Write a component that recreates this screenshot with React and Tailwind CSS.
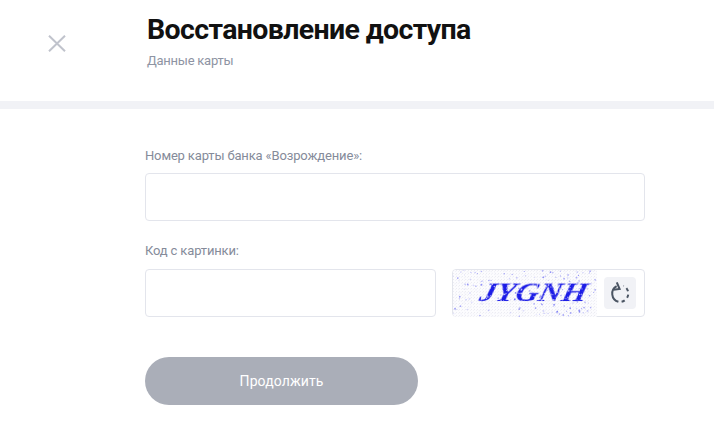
import React from 'react';

// deterministic speckle for the captcha picture
function makeDots(count, seedStart, minR, maxR, minO, maxO) {
    const dots = [];
    let seed = seedStart;
    const next = () => {
        seed = (seed * 16807) % 2147483647;
        return seed / 2147483647;
    };
    for (let i = 0; i < count; i++) {
        dots.push({
            x: next() * 143,
            y: next() * 47,
            r: minR + next() * (maxR - minR),
            o: minO + next() * (maxO - minO),
        });
    }
    return dots;
}

const blueDots = makeDots(170, 7, 0.5, 1, 0.12, 0.55);
const paleDots = makeDots(620, 91, 0.5, 0.9, 0.6, 1);

function Captcha() {
    return (
        <svg width="144" height="47" viewBox="0 0 144 47" className="block rounded-l-[3px]">
            <defs>
                <pattern id="grain" width="3" height="3" patternUnits="userSpaceOnUse">
                    <rect width="3" height="3" fill="#fcfcfe" />
                    <rect width="1" height="1" fill="#ececf2" />
                    <rect x="2" y="1" width="1" height="1" fill="#f2f2f7" />
                </pattern>
                <filter id="soft">
                    <feGaussianBlur stdDeviation="0.35" />
                </filter>
            </defs>
            <rect width="144" height="47" fill="url(#grain)" />
            <text
                x="25"
                y="31"
                transform="skewX(-14) translate(8 0)"
                fontFamily="'Liberation Serif', serif"
                fontStyle="italic"
                fontWeight="700"
                fontSize="26"
                fill="#1f1fe6"
                textLength="107"
                lengthAdjust="spacingAndGlyphs"
                filter="url(#soft)"
            >
                JYGNH
            </text>
            {paleDots.map((d, i) => (
                <circle key={i} cx={d.x} cy={d.y} r={d.r} fill="#f4f4fb" opacity={d.o * 0.8} />
            ))}
            {blueDots.map((d, i) => (
                <circle key={i} cx={d.x} cy={d.y} r={d.r} fill="#3a3af0" opacity={d.o} />
            ))}
        </svg>
    );
}

function RefreshIcon() {
    return (
        <svg width="22" height="24" viewBox="0 0 22 24" fill="none" stroke="#4b5563" strokeWidth="2">
            <path d="M7.6 5.2A8.5 8.5 0 0 0 9.4 20.8" />
            <path d="M12.6 20.8A8.5 8.5 0 0 0 14.4 4.8" strokeDasharray="3.4 3.4" />
            <path d="M7.8 1.4L10.6 8L4.4 8.8" />
        </svg>
    );
}

export default function App() {
    return (
        <div className="w-[714px] h-[444px] bg-white overflow-hidden font-['Roboto',sans-serif]">
            <header className="h-[109px] border-b-8 border-[#f1f2f6] flex">
                <div className="w-[147px] pl-[48px] pt-[35px]">
                    <svg width="18" height="17" viewBox="0 0 18 17" stroke="#c0c3cc" strokeWidth="2" fill="none">
                        <path d="M1 0.7l16 15.6M17 0.7L1 16.3" />
                    </svg>
                </div>
                <div className="pt-[10px]">
                    <h1 className="text-[28.5px] leading-[40px] font-bold text-[#111111] tracking-[-0.63px]">
                        Восстановление доступа
                    </h1>
                    <p className="mt-[2px] text-[13px] leading-[18px] text-[#8e94a3] tracking-[-0.25px]">Данные карты</p>
                </div>
            </header>

            <form className="pl-[145px] pt-[38px] w-[645px]">
                <label className="block text-[13px] leading-[18px] text-[#858b9a] tracking-[-0.15px]">
                    Номер карты банка «Возрождение»:
                </label>
                <input className="mt-[8px] block w-full h-[48px] rounded-[4px] border border-[#e3e5ec] bg-white" />

                <label className="mt-[21px] block text-[13px] leading-[18px] text-[#858b9a] tracking-[-0.15px]">
                    Код с картинки:
                </label>
                <div className="mt-[9px] flex gap-[16px]">
                    <input className="block w-[291px] h-[48px] rounded-[4px] border border-[#e3e5ec] bg-white" />
                    <div className="flex-1 h-[48px] rounded-[4px] border border-[#e3e5ec] flex items-center">
                        <Captcha />
                        <button
                            type="button"
                            className="ml-[7px] w-[32px] h-[32px] rounded-[4px] bg-[#f1f2f6] flex items-center justify-center"
                        >
                            <RefreshIcon />
                        </button>
                    </div>
                </div>

                <button
                    type="button"
                    className="mt-[40px] block w-[273px] h-[48px] rounded-full bg-[#aaaeb8] text-white text-[14px] tracking-[0.1px]"
                >
                    Продолжить
                </button>
            </form>
        </div>
    );
}
